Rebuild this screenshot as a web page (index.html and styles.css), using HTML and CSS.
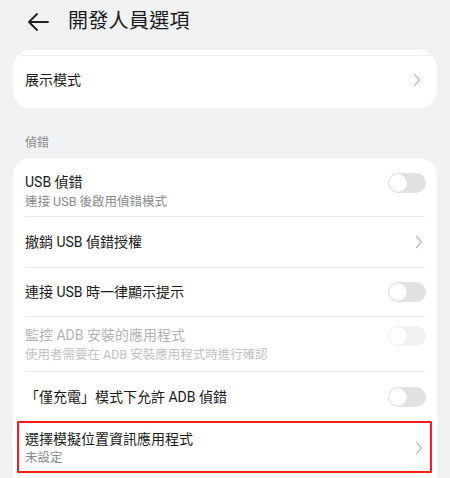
FILE: index.html
```html
<!DOCTYPE html>
<html lang="zh-Hant">
<head>
<meta charset="utf-8">
<title>開發人員選項</title>
<link rel="stylesheet" href="styles.css">
</head>
<body>
<header class="topbar">
  <svg class="back" width="22" height="20" viewBox="0 0 22 20" aria-hidden="true">
    <path d="M21 10H2.5M10 2L2 10l8 8" fill="none" stroke="#1f1f1f" stroke-width="1.8" stroke-linecap="round" stroke-linejoin="round"/>
  </svg>
  <h1 class="title">開發人員選項</h1>
</header>

<main>
  <section class="card card-top">
    <div class="cut"></div>
    <div class="simple-row">
      <span class="label">展示模式</span>
      <svg class="chev" width="8" height="14" viewBox="0 0 8 14" aria-hidden="true"><path d="M1.5 1.5L6.5 7l-5 5.5" fill="none" stroke="#bdbdbd" stroke-width="1.3" stroke-linecap="round" stroke-linejoin="round"/></svg>
    </div>
  </section>

  <div class="section-label">偵錯</div>

  <section class="card card-list">
    <div class="row">
      <div class="inner r1">
        <div class="texts">
          <div class="label">USB 偵錯</div>
          <div class="sub">連接 USB 後啟用偵錯模式</div>
        </div>
        <span class="toggle"><span class="knob"></span></span>
      </div>
    </div>
    <div class="row">
      <div class="inner r2">
        <div class="texts"><div class="label">撤銷 USB 偵錯授權</div></div>
        <svg class="chev" width="8" height="14" viewBox="0 0 8 14" aria-hidden="true"><path d="M1.5 1.5L6.5 7l-5 5.5" fill="none" stroke="#bdbdbd" stroke-width="1.3" stroke-linecap="round" stroke-linejoin="round"/></svg>
      </div>
    </div>
    <div class="row">
      <div class="inner r3">
        <div class="texts"><div class="label">連接 USB 時一律顯示提示</div></div>
        <span class="toggle"><span class="knob"></span></span>
      </div>
    </div>
    <div class="row disabled">
      <div class="inner r4">
        <div class="texts">
          <div class="label">監控 ADB 安裝的應用程式</div>
          <div class="sub">使用者需要在 ADB 安裝應用程式時進行確認</div>
        </div>
        <span class="toggle"><span class="knob"></span></span>
      </div>
    </div>
    <div class="row">
      <div class="inner r5 noline">
        <div class="texts"><div class="label">「僅充電」模式下允許 ADB 偵錯</div></div>
        <span class="toggle"><span class="knob"></span></span>
      </div>
    </div>
    <div class="row highlight">
      <div class="inner r6 noline">
        <div class="texts">
          <div class="label">選擇模擬位置資訊應用程式</div>
          <div class="sub sub-tight">未設定</div>
        </div>
        <svg class="chev chev-low" width="8" height="14" viewBox="0 0 8 14" aria-hidden="true"><path d="M1.5 1.5L6.5 7l-5 5.5" fill="none" stroke="#bdbdbd" stroke-width="1.3" stroke-linecap="round" stroke-linejoin="round"/></svg>
      </div>
    </div>
    <div class="row">
      <div class="inner r7 noline"></div>
    </div>
  </section>
</main>
</body>
</html>
```

FILE: styles.css
```css
* { box-sizing: border-box; }

html, body {
  margin: 0;
  padding: 0;
  background: #f1f2f4;
  font-family: Roboto, "Noto Sans CJK TC", "Noto Sans", sans-serif;
  color: #1a1a1a;
}

.topbar {
  height: 42px;
  display: flex;
  align-items: center;
  padding-left: 27px;
}

.back {
  flex: none;
  margin-top: 1px;
}

.title {
  margin: 0 0 0 19px;
  font-size: 20px;
  font-weight: 400;
  line-height: 28px;
  letter-spacing: 0.3px;
  color: #1a1a1a;
}

main {
  padding: 8px 13px 0 13px;
}

.card {
  background: #ffffff;
  border-radius: 18px;
}

.card-top {
  height: 58px;
  padding-top: 5px;
}

.cut {
  height: 1px;
  background: #ededed;
  margin: 0 2px 0 7px;
}

.simple-row {
  display: flex;
  align-items: center;
  justify-content: space-between;
  padding: 14px 14px 18px 12px;
  height: 52px;
}

.label {
  font-size: 14px;
  line-height: 20px;
  color: #1a1a1a;
}

.sub {
  font-size: 12.5px;
  line-height: 20px;
  color: #8a8a8a;
}

.sub-tight {
  line-height: 18px;
}

.section-label {
  margin: 26px 0 6px 12px;
  font-size: 12px;
  line-height: 18px;
  color: #8a8a8a;
}

.card-list {
  border-radius: 18px 18px 0 0;
}

.row {
  padding: 0 12px;
}

.inner {
  display: flex;
  align-items: center;
  justify-content: space-between;
  border-bottom: 1px solid #e9e9e9;
}

.inner.noline {
  border-bottom: none;
}

.r1 { padding: 14px 0 4px; }
.r2 { padding: 15px 0 15px; }
.r3 { padding: 14px 0 14px; }
.r4 { padding: 8px 0 6px; }
.r5 { padding: 15px 0 14px; }
.r6 { padding: 8px 0 6px; }
.r7 { height: 20px; }

.r1 .toggle, .r4 .toggle { margin-top: -18px; }
.r4 .toggle { margin-top: -18px; }

.texts {
  flex: 1;
  min-width: 0;
}

.chev {
  flex: none;
  margin-right: 2px;
}

.chev-low {
  margin-top: 0;
}

.toggle {
  flex: none;
  position: relative;
  width: 38px;
  height: 20px;
  border-radius: 10px;
  background: #e2e2e2;
  margin-right: -1px;
}

.knob {
  position: absolute;
  left: 1px;
  top: 1px;
  width: 18px;
  height: 18px;
  border-radius: 50%;
  background: #ffffff;
  box-shadow: 0 0 0 0.5px #d6d6d6;
}

.disabled .label { color: #b4b4b4; }
.disabled .sub { color: #c2c2c2; }
.disabled .toggle { background: #f2f2f2; }
.disabled .knob { box-shadow: 0 0 0 0.5px #ececec; }

.highlight {
  position: relative;
}

.highlight::after {
  content: "";
  position: absolute;
  left: 4px;
  right: 5px;
  top: 0;
  bottom: 0;
  border: 2px solid #ff1a1a;
  border-radius: 1px;
  pointer-events: none;
}
```
